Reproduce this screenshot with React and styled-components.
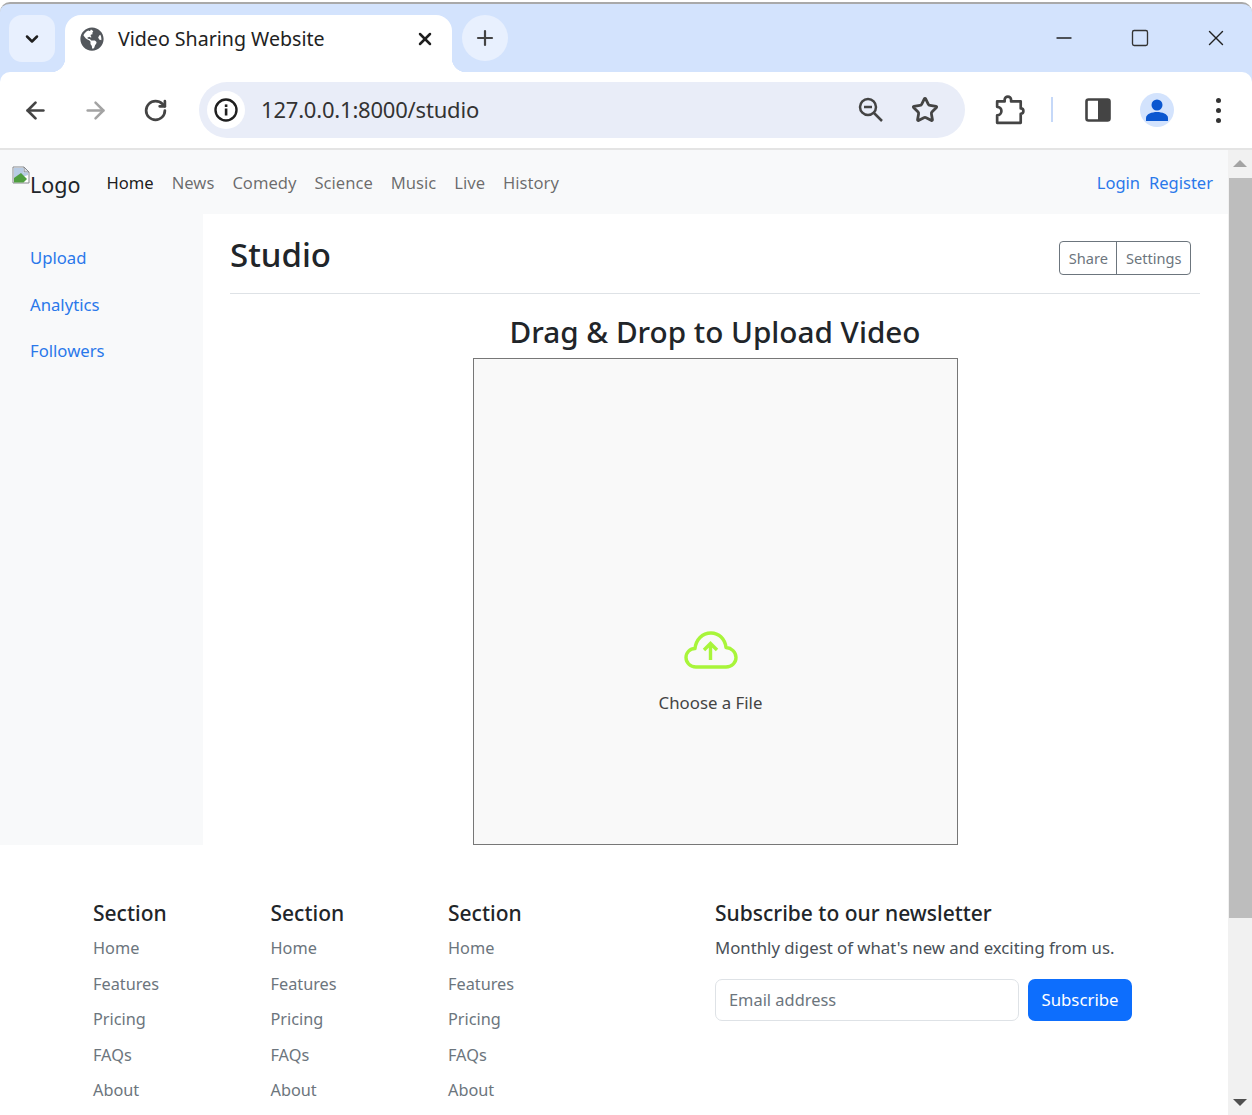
import React from "react"
import styled, { createGlobalStyle } from "styled-components"
import { FaGlobeAmericas } from "react-icons/fa"
import { ChevronDown, X, Plus, ArrowLeft, ArrowRight, RotateCw, Minus, Square, Star } from "lucide-react"

const FONT = `"Noto Sans", "Open Sans", sans-serif`

const Global = createGlobalStyle`
  html, body { margin: 0; padding: 0; background: #fff; overflow: hidden; }
  body { font-family: ${FONT}; width: 1252px; height: 1115px; }
  * { box-sizing: border-box; }
`

const navItems = ["News", "Comedy", "Science", "Music", "Live", "History"]
const sideItems = ["Upload", "Analytics", "Followers"]
const footerLinks = ["Home", "Features", "Pricing", "FAQs", "About"]

function App() {
  return (
    <Window>
      <Global />
      <TabStrip>
        <TabMenu><ChevronDown size={20} strokeWidth={3} color="#1f1f1f" /></TabMenu>
        <Tab>
          <FaGlobeAmericas size={24} color="#53575c" />
          <TabTitle>Video Sharing Website</TabTitle>
          <TabClose><X size={20} strokeWidth={3} color="#1f1f1f" /></TabClose>
        </Tab>
        <NewTab><Plus size={24} strokeWidth={2.2} color="#444" /></NewTab>
        <WindowButtons>
          <WindowButton><Minus size={24} strokeWidth={1.4} color="#222" /></WindowButton>
          <WindowButton><Square size={20} strokeWidth={1.6} color="#333" /></WindowButton>
          <WindowButton><X size={26} strokeWidth={1.3} color="#222" /></WindowButton>
        </WindowButtons>
      </TabStrip>

      <ToolbarBack>
        <Toolbar>
          <ToolSlot><ArrowLeft size={27} strokeWidth={2.4} color="#444" /></ToolSlot>
          <ToolSlot><ArrowRight size={27} strokeWidth={2.2} color="#a3a3a3" /></ToolSlot>
          <ToolSlot><RotateCw size={25} strokeWidth={2.6} color="#444" /></ToolSlot>
          <Omnibox>
            <InfoBadge>
              <svg width="26" height="26" viewBox="0 0 26 26">
                <circle cx="13" cy="13" r="10.5" fill="none" stroke="#1f1f1f" strokeWidth="2.4" />
                <rect x="11.8" y="11.5" width="2.6" height="7" fill="#1f1f1f" />
                <rect x="11.8" y="7.4" width="2.6" height="2.6" fill="#1f1f1f" />
              </svg>
            </InfoBadge>
            <Url>127.0.0.1:8000/studio</Url>
            <OmniIcons>
              <svg width="28" height="28" viewBox="0 0 28 28">
                <circle cx="11" cy="11" r="8" fill="none" stroke="#444" strokeWidth="2.5" />
                <path d="M7 11h8M17 17l8 8" fill="none" stroke="#444" strokeWidth="2.5" />
              </svg>
              <Star size={28} strokeWidth={2.4} color="#444" />
            </OmniIcons>
          </Omnibox>
          <Extensions>
            <svg width="30" height="30" viewBox="0 0 28 28">
              <path d="M2 6H9V4.500a3 3 0 0 1 6 0V6H24V12.500a2.500 2.500 0 0 1 0 5V26H2V19a4 4 0 0 0 0-8Z" fill="none" stroke="#444" strokeWidth="2.5" strokeLinejoin="round" />
            </svg>
          </Extensions>
          <ToolDivider />
          <PanelSlot>
            <svg width="26" height="26" viewBox="0 0 26 26">
              <rect x="1.500" y="2.500" width="23" height="21" rx="2" fill="#fff" stroke="#444" strokeWidth="2.6" />
              <rect x="13" y="2.500" width="11.500" height="21" fill="#444" />
            </svg>
          </PanelSlot>
          <AvatarSlot>
            <Avatar>
              <svg width="24" height="24" viewBox="0 0 24 24">
                <circle cx="12" cy="7" r="5.500" fill="#0b57d0" />
                <path d="M1 23v-3c0-4 6-6 11-6s11 2 11 6v3z" fill="#0b57d0" />
              </svg>
            </Avatar>
          </AvatarSlot>
          <ToolSlot>
            <Dots><i /><i /><i /></Dots>
          </ToolSlot>
        </Toolbar>
      </ToolbarBack>

      <Viewport>
        <Page>
          <Navbar>
            <Brand>
              <BrokenImage width="18" height="18" viewBox="0 0 18 18">
                <path d="M1 1h11l5 5v11H1z" fill="#fff" stroke="#85888d" />
                <path d="M12 1v5h5z" fill="#dcdfe3" stroke="#85888d" />
                <path d="M2 2h9.500v4.500H16V9L2 14z" fill="#b8cce4" />
                <path d="M2 16.500V12l7-5 6 6-3.500 3.500z" fill="#4f9e3f" />
              </BrokenImage>
              Logo
            </Brand>
            <NavLinks>
              <NavLink $active>Home</NavLink>
              {navItems.map(item => <NavLink key={item}>{item}</NavLink>)}
            </NavLinks>
            <AuthLinks>
              <AuthLink>Login</AuthLink>
              <AuthLink>Register</AuthLink>
            </AuthLinks>
          </Navbar>

          <Workspace>
            <Sidebar>
              {sideItems.map(item => <SideLink key={item}>{item}</SideLink>)}
            </Sidebar>
            <Main>
              <MainHeader>
                <Heading>Studio</Heading>
                <ButtonGroup>
                  <GroupButton>Share</GroupButton>
                  <GroupButton>Settings</GroupButton>
                </ButtonGroup>
              </MainHeader>
              <UploadTitle>Drag &amp; Drop to Upload Video</UploadTitle>
              <DropZone>
                <svg width="54" height="38" viewBox="0 0 54 38">
                  <path d="M12 36C6 36 2 31.500 2 26.500C2 21.500 6 17.500 11 17.500C12 9 18 2 27 2C35 2 41 8 42 16.500C47.500 17 52 21 52 26.500C52 31.500 48 36 42 36Z" fill="none" stroke="#a8f53a" strokeWidth="3.400" strokeLinejoin="round" />
                  <path d="M26.500 29V13M20 19l6.500-6.500L33 19" fill="none" stroke="#a8f53a" strokeWidth="3.400" />
                </svg>
                <ChooseFile>Choose a File</ChooseFile>
              </DropZone>
            </Main>
          </Workspace>

          <Footer>
            {[0, 1, 2].map(col => (
              <FooterColumn key={col}>
                <FooterTitle>Section</FooterTitle>
                {footerLinks.map(link => <FooterLink key={link}>{link}</FooterLink>)}
              </FooterColumn>
            ))}
            <Newsletter>
              <FooterTitle>Subscribe to our newsletter</FooterTitle>
              <NewsletterText>Monthly digest of what's new and exciting from us.</NewsletterText>
              <SubscribeRow>
                <EmailInput placeholder="Email address" />
                <SubscribeButton>Subscribe</SubscribeButton>
              </SubscribeRow>
            </Newsletter>
          </Footer>
        </Page>

        <Scrollbar>
          <ScrollArrow $dir="up" />
          <ScrollThumb />
          <ScrollArrow $dir="down" />
        </Scrollbar>
      </Viewport>
    </Window>
  )
}

const Window = styled.div`
  width: 1252px;
  height: 1115px;
  overflow: hidden;
  padding-top: 2px;
  background: #fff;
`

const TabStrip = styled.div`
  height: 70px;
  display: flex;
  background: #d3e3fd;
  border-top: 2px solid #a9a9a9;
  border-radius: 10px 10px 0 0;
  padding: 11px 0 0 9px;
`

const TabMenu = styled.div`
  width: 46px;
  height: 47px;
  border-radius: 13px;
  background: #e8f0fe;
  display: flex;
  align-items: center;
  justify-content: center;
`

const Tab = styled.div`
  width: 387px;
  height: 57px;
  margin-left: 10px;
  padding: 0 16px 10px 15px;
  background: #fff;
  border-radius: 16px 16px 0 0;
  display: flex;
  align-items: center;
  position: relative;

  &::before, &::after {
    content: "";
    position: absolute;
    bottom: 0;
    width: 14px;
    height: 14px;
  }
  &::before {
    left: -14px;
    background: radial-gradient(circle at 0 0, #d3e3fd 14px, #fff 14.5px);
  }
  &::after {
    right: -14px;
    background: radial-gradient(circle at 100% 0, #d3e3fd 14px, #fff 14.5px);
  }
`

const TabTitle = styled.span`
  margin-left: 14px;
  font-size: 19.600px;
  color: #222;
  white-space: nowrap;
`

const TabClose = styled.span`
  margin-left: auto;
  display: flex;
  padding-right: 1px;
`

const NewTab = styled.div`
  width: 46px;
  height: 46px;
  margin-left: 10px;
  border-radius: 50%;
  background: #e8f0fe;
  display: flex;
  align-items: center;
  justify-content: center;
`

const WindowButtons = styled.div`
  margin-left: auto;
  margin-right: -2px;
  display: flex;
  height: 45px;
`

const WindowButton = styled.div`
  width: 76px;
  display: flex;
  align-items: center;
  justify-content: center;
`

const ToolbarBack = styled.div`
  background: #d3e3fd;
`

const Toolbar = styled.div`
  height: 78px;
  background: #fff;
  border-radius: 10px 10px 0 0;
  border-bottom: 2px solid #e4e4e4;
  padding: 10px 0 0 5px;
  display: flex;
  align-items: flex-start;
`

const ToolSlot = styled.div`
  width: 60px;
  height: 56px;
  display: flex;
  align-items: center;
  justify-content: center;
`

const Omnibox = styled.div`
  width: 766px;
  height: 56px;
  margin-left: 14px;
  border-radius: 28px;
  background: #e9edf8;
  display: flex;
  align-items: center;
  padding: 0 26px 0 8px;
`

const InfoBadge = styled.div`
  width: 38px;
  height: 38px;
  border-radius: 50%;
  background: #fff;
  display: flex;
  align-items: center;
  justify-content: center;
`

const Url = styled.span`
  margin: 0 0 2px 16px;
  font-size: 22px;
  letter-spacing: -0.2px;
  color: #333;
`

const OmniIcons = styled.div`
  margin-left: auto;
  display: flex;
  align-items: center;
  gap: 26px;
`

const Extensions = styled(ToolSlot)`
  margin-left: 15px;
`

const ToolDivider = styled.div`
  width: 2px;
  height: 25px;
  margin: 15px 0 0 11px;
  background: #c5d8f8;
`

const PanelSlot = styled(ToolSlot)`
  margin-left: 15px;
`

const AvatarSlot = styled(ToolSlot)`
  width: 58px;
`

const Avatar = styled.div`
  width: 34px;
  height: 34px;
  border-radius: 50%;
  background: #d3e3fd;
  display: flex;
  align-items: center;
  justify-content: center;
  overflow: hidden;
`

const Dots = styled.div`
  display: flex;
  flex-direction: column;
  gap: 5px;
  margin-left: 4px;

  i {
    display: block;
    width: 5px;
    height: 5px;
    border-radius: 50%;
    background: #333;
  }
`

const Viewport = styled.div`
  display: flex;
  height: 965px;
  overflow: hidden;
`

const Page = styled.div`
  width: 1228px;
  flex: none;
`

const Navbar = styled.nav`
  height: 64px;
  background: #f8f9fa;
  display: flex;
  align-items: center;
  padding: 0 15px 0 12px;
`

const Brand = styled.div`
  font-size: 21.500px;
  color: #212529;
  display: flex;
  align-items: flex-start;
  padding-top: 5px;
`

const BrokenImage = styled.svg`
  flex: none;
  margin-top: -4px;
`

const NavLinks = styled.div`
  display: flex;
  gap: 18px;
  margin-left: 26px;
`

const NavLink = styled.a`
  font-size: 16.600px;
  color: ${p => (p.$active ? "rgba(0, 0, 0, 0.9)" : "rgba(0, 0, 0, 0.58)")};
`

const AuthLinks = styled.div`
  margin-left: auto;
  display: flex;
  gap: 9px;
`

const AuthLink = styled.a`
  font-size: 16.500px;
  color: #2a78ea;
`

const Workspace = styled.div`
  display: flex;
  height: 631px;
`

const Sidebar = styled.aside`
  width: 203px;
  flex: none;
  background: #f8f9fa;
  padding: 31px 0 0 30px;
  display: flex;
  flex-direction: column;
  gap: 21px;
`

const SideLink = styled.a`
  font-size: 16.700px;
  line-height: 25.500px;
  color: #2a78ea;
`

const Main = styled.main`
  flex: 1;
  padding: 0 28px 0 27px;
  display: flex;
  flex-direction: column;
  align-items: center;
`

const MainHeader = styled.div`
  width: 100%;
  height: 80px;
  flex: none;
  border-bottom: 1px solid #dee2e6;
  display: flex;
  align-items: flex-start;
  justify-content: space-between;
  padding: 18px 9px 0 0;
`

const Heading = styled.h1`
  margin: 0;
  font-size: 33px;
  line-height: 46px;
  font-weight: 500;
  color: #212529;
`

const ButtonGroup = styled.div`
  display: flex;
  height: 34px;
  margin-top: 9px;
  border: 1px solid #6c757d;
  border-radius: 4px;
`

const GroupButton = styled.div`
  padding: 0 8.500px;
  font-size: 14.600px;
  line-height: 32px;
  color: #6c757d;

  & + & {
    border-left: 1px solid #6c757d;
  }
`

const UploadTitle = styled.h2`
  margin: 0;
  height: 64px;
  flex: none;
  padding-top: 18px;
  font-size: 29.700px;
  line-height: 40px;
  font-weight: 500;
  color: #212529;
  white-space: nowrap;
`

const DropZone = styled.div`
  width: 485px;
  flex: 1;
  background: #f9f9f9;
  border: 1px solid #777;
  display: flex;
  flex-direction: column;
  align-items: center;
  padding: 272px 9px 0 0;
`

const ChooseFile = styled.span`
  margin-top: 21px;
  font-size: 16.800px;
  line-height: 26px;
  color: #444;
`

const Footer = styled.footer`
  display: grid;
  grid-template-columns: 177.500px 177.500px 267px 1fr;
  padding: 53px 0 0 93px;
  background: #fff;
`

const FooterColumn = styled.div`
  display: flex;
  flex-direction: column;
`

const FooterTitle = styled.h5`
  margin: 0 0 3px;
  font-size: 21px;
  line-height: 30px;
  font-weight: 500;
  color: #212529;
`

const FooterLink = styled.a`
  font-size: 16.300px;
  line-height: 35.500px;
  color: #6c757d;
`

const Newsletter = styled.div`
  display: flex;
  flex-direction: column;
`

const NewsletterText = styled.p`
  margin: -1px 0 0;
  font-size: 16.750px;
  line-height: 35.500px;
  color: #495057;
`

const SubscribeRow = styled.div`
  display: flex;
  gap: 9px;
  margin-top: 13px;
`

const EmailInput = styled.input`
  width: 304px;
  height: 42px;
  padding: 0 13px;
  border: 1px solid #dee2e6;
  border-radius: 7px;
  font-family: ${FONT};
  font-size: 16.400px;
  background: #fff;

  &::placeholder {
    color: #6c757d;
    opacity: 1;
  }
`

const SubscribeButton = styled.button`
  width: 104px;
  height: 42px;
  border: 0;
  border-radius: 7px;
  background: #0d6efd;
  color: #fff;
  font-family: ${FONT};
  font-size: 16.800px;
`

const Scrollbar = styled.div`
  width: 24px;
  flex: none;
  background: #f1f1f1;
  display: flex;
  flex-direction: column;
  align-items: center;
`

const ScrollArrow = styled.div`
  width: 0;
  height: 0;
  flex: none;
  margin: ${p => (p.$dir === "up" ? "10px 0 7px" : "auto 0 9px")};
  border-left: 7px solid transparent;
  border-right: 7px solid transparent;
  ${p => (p.$dir === "up" ? "border-bottom: 7px solid #a3a3a3;" : "border-top: 7px solid #505050;")}
`

const ScrollThumb = styled.div`
  width: 23px;
  height: 740px;
  margin-left: 1px;
  flex: none;
  margin-top: 4px;
  background: #bdbdbd;
`

export default App
